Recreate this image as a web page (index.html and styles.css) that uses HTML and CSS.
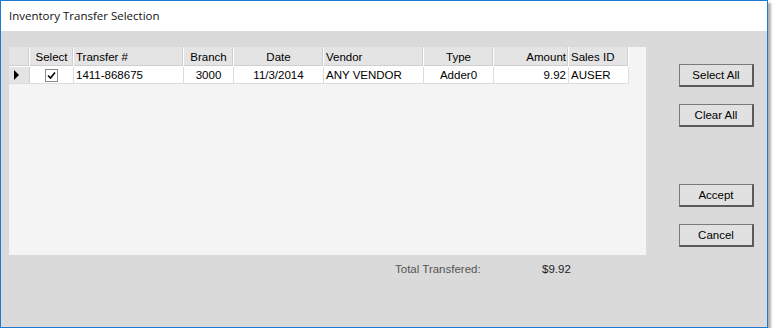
FILE: index.html
```html
<!DOCTYPE html>
<html lang="en">

<head>
    <meta charset="UTF-8">
    <title>Inventory Transfer Selection</title>
    <link rel="stylesheet" href="styles.css">
</head>

<body>
    <div class="window">
        <div class="title-bar">Inventory Transfer Selection</div>

        <div class="content">
            <div class="left-pane">
                <!-- transfer grid -->
                <div class="grid">
                    <table>
                        <thead>
                            <tr>
                                <th class="col-row"></th>
                                <th class="col-select center">Select</th>
                                <th class="col-transfer">Transfer #</th>
                                <th class="col-branch center">Branch</th>
                                <th class="col-date center">Date</th>
                                <th class="col-vendor">Vendor</th>
                                <th class="col-type center">Type</th>
                                <th class="col-amount right">Amount</th>
                                <th class="col-sales">Sales ID</th>
                            </tr>
                        </thead>
                        <tbody>
                            <tr>
                                <td class="row-head"><span class="arrow"></span></td>
                                <td class="center"><span class="check">
                                    <svg width="9" height="9" viewBox="0 0 9 9"><path d="M1 4.5 L3.5 7 L8 1.5" fill="none" stroke="#000" stroke-width="1.6"/></svg>
                                </span></td>
                                <td>1411-868675</td>
                                <td class="center">3000</td>
                                <td class="center">11/3/2014</td>
                                <td>ANY VENDOR</td>
                                <td class="center">Adder0</td>
                                <td class="right">9.92</td>
                                <td>AUSER</td>
                            </tr>
                        </tbody>
                    </table>
                </div>

                <div class="totals">
                    <span class="total-label">Total Transfered:</span>
                    <span class="total-value">$9.92</span>
                </div>
            </div>

            <div class="buttons">
                <button>Select All</button>
                <button>Clear All</button>
                <button class="gap-top">Accept</button>
                <button>Cancel</button>
            </div>
        </div>
    </div>
</body>

</html>
```

FILE: styles.css
```css
body {
    margin: 0;
    background-color: #ffffff;
    font-family: "Liberation Sans", Arial, sans-serif;
    font-size: 11.5px;
    color: #000;
}

.window {
    width: 766px;
    height: 326px;
    border: 1px solid #1c7ad4;
    background-color: #dadada;
    box-shadow: 3px 3px 2px rgba(0, 0, 0, 0.3);
    display: flex;
    flex-direction: column;
}

.title-bar {
    height: 30px;
    line-height: 30px;
    background-color: #ffffff;
    padding-left: 8px;
    font-family: "Open Sans", "Noto Sans", sans-serif;
    font-size: 11.5px;
    color: #111;
}

.content {
    flex: 1;
    display: flex;
    padding: 16px 0 0 8px;
}

.left-pane {
    width: 637px;
}

.grid {
    height: 208px;
    background-color: #f4f4f4;
}

table {
    border-collapse: collapse;
    table-layout: fixed;
}

th, td {
    padding: 0 2px;
    white-space: nowrap;
    overflow: hidden;
    text-align: left;
    font-weight: normal;
}

th {
    height: 18px;
    padding-top: 1px;
    background-color: #e4e4e4;
    border-right: 1px solid #ffffff;
    border-bottom: 1px solid #ffffff;
    box-shadow: inset -1px -1px 0 #cfcfcf;
}

td {
    height: 16px;
    background-color: #ffffff;
    border-right: 1px solid #dcdcdc;
    border-bottom: 1px solid #dcdcdc;
}

td.row-head {
    background-color: #e4e4e4;
    border-right: 1px solid #cfcfcf;
    padding: 0;
}

.center { text-align: center; }
.right { text-align: right; }

.col-row { width: 16px; }
.col-select { width: 39px; }
.col-transfer { width: 105px; }
.col-branch { width: 45px; }
.col-date { width: 85px; }
.col-vendor { width: 95px; }
.col-type { width: 65px; }
.col-amount { width: 70px; }
.col-sales { width: 55px; }

.arrow {
    display: block;
    width: 0;
    height: 0;
    margin-left: 5px;
    border-top: 5px solid transparent;
    border-bottom: 5px solid transparent;
    border-left: 5px solid #000;
}

.check {
    display: inline-block;
    width: 11px;
    height: 11px;
    border: 1px solid #8a8a8a;
    background-color: #fff;
    vertical-align: middle;
    line-height: 0;
}

.check svg {
    margin: 1px;
}

.totals {
    display: flex;
    padding: 8px 0 0 386px;
    color: #555;
}

.total-label {
    width: 147px;
}

.total-value {
    color: #222;
}

.buttons {
    display: flex;
    flex-direction: column;
    gap: 17px;
    padding: 17px 0 0 33px;
}

button {
    width: 75px;
    height: 23px;
    font-family: "Liberation Sans", Arial, sans-serif;
    font-size: 11.5px;
    color: #000;
    background-color: #e1e1e1;
    border: 1px solid #7a7a7a;
    border-right: 2px solid #5a5a5a;
    border-bottom: 2px solid #5a5a5a;
    padding: 0;
}

.buttons .gap-top {
    margin-top: 40px;
}
```
